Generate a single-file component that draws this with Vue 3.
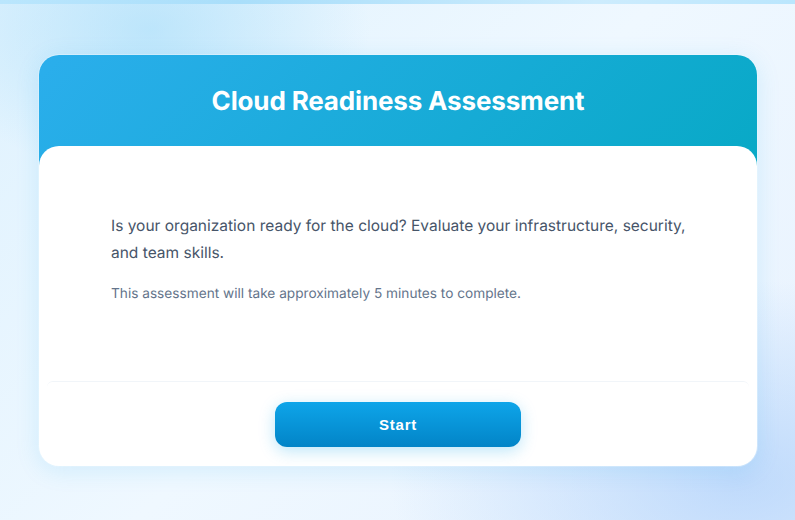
<template>
  <div class="page">
    <div class="top-bar"></div>
    <div class="card">
      <header class="card-header">
        <h1>Cloud Readiness Assessment</h1>
      </header>
      <main class="card-body">
        <p class="intro">
          Is your organization ready for the cloud? Evaluate your infrastructure, security, and team skills.
        </p>
        <p class="note">This assessment will take approximately 5 minutes to complete.</p>
      </main>
      <footer class="card-footer">
        <button class="btn-start">Start</button>
      </footer>
    </div>
  </div>
</template>

<script setup>
</script>

<style>
html,
body {
  margin: 0;
  padding: 0;
}
</style>

<style scoped>
.page {
  box-sizing: border-box;
  width: 795px;
  height: 520px;
  overflow: hidden;
  padding: 55px 38px 54px 39px;
  font-family: Inter, "Liberation Sans", sans-serif;
  text-rendering: geometricPrecision;
  background:
    radial-gradient(ellipse 220px 150px at 150px 30px, rgba(150, 215, 248, 0.5) 0, rgba(150, 215, 248, 0) 100%),
    radial-gradient(ellipse 350px 200px at 740px 480px, rgba(165, 203, 250, 0.62) 0, rgba(165, 203, 250, 0) 100%),
    linear-gradient(135deg, #dff2fe 0%, #eff8ff 50%, #e8f2fe 100%);
  position: relative;
}

.top-bar {
  position: absolute;
  top: 0;
  left: 0;
  right: 0;
  height: 4px;
  background: linear-gradient(90deg, #bae6fd 0%, #a9defa 30%, #cdecfd 75%, #bae6fd 100%);
}

.card {
  height: 411px;
  display: flex;
  flex-direction: column;
  border-radius: 20px;
  overflow: hidden;
  background: #fff;
  box-shadow: 0 4px 24px rgba(14, 165, 233, 0.13), 0 0 0 1px rgba(255, 255, 255, 0.35);
}

.card-header {
  height: 111px;
  flex-shrink: 0;
  box-sizing: border-box;
  padding-top: 29px;
  text-align: center;
  background: linear-gradient(135deg, #2baeec 0%, #08a9c6 100%);
}

.card-header h1 {
  margin: 0;
  font-size: 26px;
  line-height: 36px;
  font-weight: 700;
  letter-spacing: -0.15px;
  color: #fff;
}

.card-body {
  flex: 1;
  margin-top: -20px;
  padding: 66px 64px 0 72px;
  background: #fff;
  border-radius: 20px 20px 0 0;
}

.intro {
  margin: 0 0 16px;
  font-size: 15.5px;
  line-height: 27px;
  color: #475569;
}

.note {
  margin: 0;
  font-size: 13.66px;
  line-height: 24px;
  color: #64748b;
}

.card-footer {
  height: 85px;
  box-sizing: border-box;
  margin: 0 8px;
  padding-top: 20px;
  display: flex;
  justify-content: center;
  border-top: 1px solid #f1f5f9;
  border-radius: 6px 6px 0 0;
}

.btn-start {
  width: 246px;
  height: 45px;
  border: none;
  border-radius: 12px;
  font-family: "Liberation Sans", Arial, sans-serif;
  font-size: 15px;
  font-weight: 700;
  letter-spacing: 0.8px;
  color: #fff;
  cursor: pointer;
  background: linear-gradient(180deg, #0ea5e9 0%, #0284c7 100%);
  box-shadow: 0 4px 16px rgba(14, 165, 233, 0.28);
}
</style>
